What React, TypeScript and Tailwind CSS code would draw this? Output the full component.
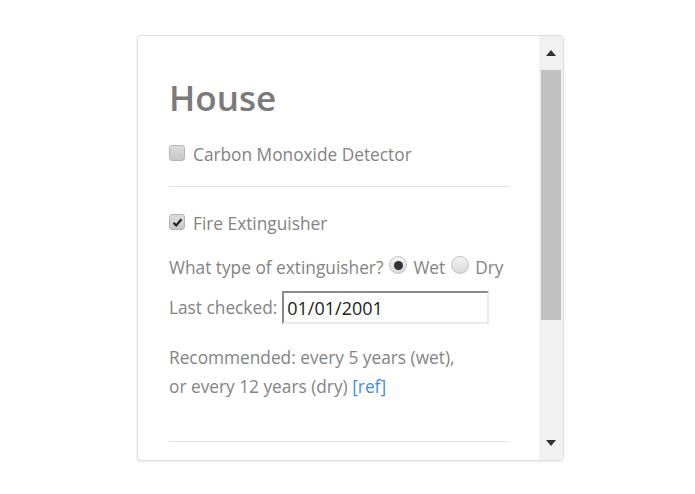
import React from "react";

const font = { fontFamily: '"Open Sans", "Noto Sans", sans-serif' };

const Checkbox = ({ checked }: { checked?: boolean }) => (
  <span className="inline-flex h-[16px] w-[16px] shrink-0 -translate-y-[2px] items-center justify-center rounded-[3px] border border-[#b5b5b5] bg-gradient-to-b from-[#dcdcdc] to-[#c8c8c8]">
    {checked && (
      <svg width="11" height="11" viewBox="0 0 11 11">
        <path d="M1.5 5.8 L4.2 8.4 L9.5 2.2" fill="none" stroke="#222" strokeWidth="2.2" />
      </svg>
    )}
  </span>
);

const Radio = ({ checked }: { checked?: boolean }) => (
  <span className="inline-flex h-[18px] w-[18px] shrink-0 -translate-y-[3px] items-center justify-center rounded-full border border-[#c4c4c4] bg-gradient-to-b from-[#f4f4f4] to-[#d8d8d8]">
    {checked && <span className="h-[9px] w-[9px] rounded-full bg-[#333]" />}
  </span>
);

export default function App() {
  return (
    <div className="min-h-screen bg-white pt-[35px] pl-[137px]" style={font}>
      <div className="flex h-[426px] w-[427px] overflow-hidden rounded-[4px] border border-[#dedede] bg-white shadow-[0_1px_3px_rgba(0,0,0,0.08)]">
        <div className="flex-1 pl-[31px] pr-[30px] pt-[38px] text-[17.3px] text-[#838383]">
          <h1 className="text-[35px] font-semibold leading-[48px] text-[#7a7a7a]">House</h1>
          <label className="mt-[21px] flex items-center gap-[8px] leading-[24px]">
            <Checkbox />
            <span>Carbon Monoxide Detector</span>
          </label>
          <hr className="mt-[19px] border-t border-[#e2e2e2]" />
          <label className="mt-[25px] flex items-center gap-[8px] leading-[24px]">
            <Checkbox checked />
            <span>Fire Extinguisher</span>
          </label>
          <div className="mt-[20px] flex items-center gap-[6px] leading-[24px]">
            <span>What type of extinguisher?</span>
            <Radio checked />
            <span>Wet</span>
            <Radio />
            <span>Dry</span>
          </div>
          <div className="mt-[11px] flex items-center gap-[5px] leading-[24px]">
            <span>Last checked:</span>
            <div className="flex h-[33px] w-[207px] items-center border-[2px] border-t-[#888] border-l-[#888] border-r-[#eaeaea] border-b-[#eaeaea] px-[3px] text-[18px] text-[#222]">
              01/01/2001
            </div>
          </div>
          <p className="mt-[19px] leading-[29px]">
            Recommended: every 5 years (wet),
            <br />
            or every 12 years (dry) <a className="text-[#3b8ee0]">[ref]</a>
          </p>
          <hr className="mt-[40px] border-t border-[#e2e2e2]" />
        </div>
        <div className="flex w-[24px] flex-col bg-[#f1f1f1]">
          <div className="flex h-[34px] items-center justify-center">
            <svg width="10" height="6" viewBox="0 0 10 6">
              <path d="M5 0 L10 6 L0 6 Z" fill="#333" />
            </svg>
          </div>
          <div className="mx-[2px] h-[250px] bg-[#c1c1c1]" />
          <div className="flex-1" />
          <div className="flex h-[34px] items-center justify-center">
            <svg width="10" height="6" viewBox="0 0 10 6">
              <path d="M0 0 L10 0 L5 6 Z" fill="#333" />
            </svg>
          </div>
        </div>
      </div>
    </div>
  );
}
